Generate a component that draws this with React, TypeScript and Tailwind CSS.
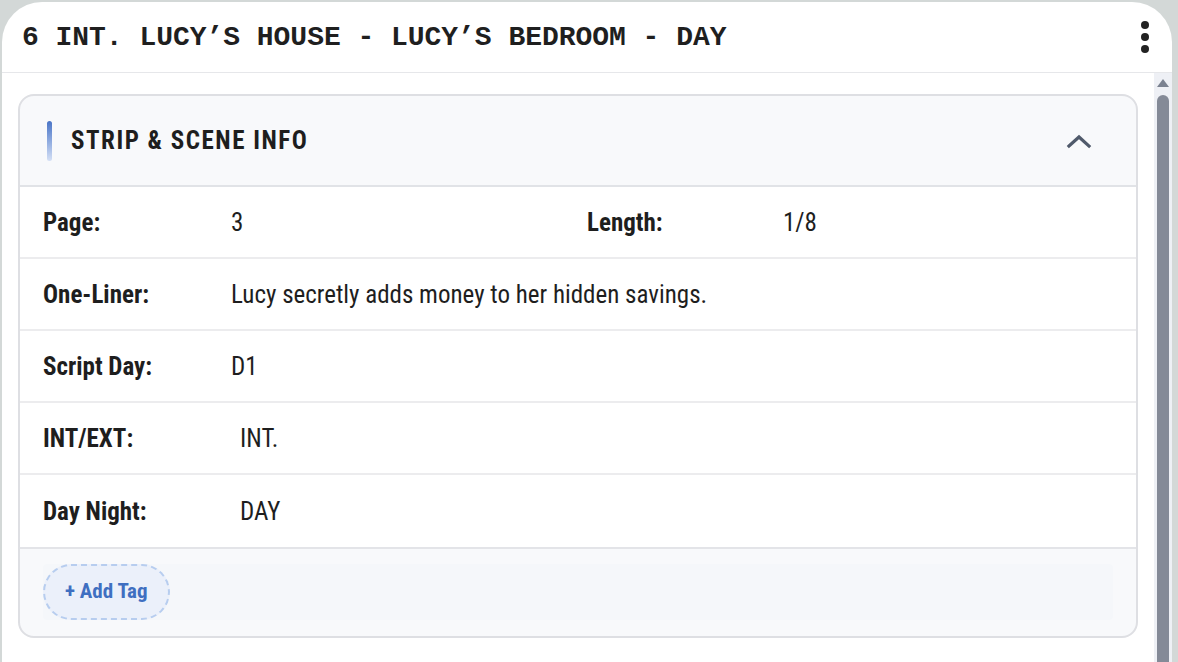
import React from 'react';

const rows: { label: string; value: string; indent?: boolean }[] = [
    { label: 'One-Liner:', value: 'Lucy secretly adds money to her hidden savings.' },
    { label: 'Script Day:', value: 'D1' },
    { label: 'INT/EXT:', value: 'INT.', indent: true },
    { label: 'Day Night:', value: 'DAY', indent: true },
];

export default function App() {
    return (
        <div className="w-[1178px] h-[662px] bg-[#d3d8d7] overflow-hidden pt-[2px] pl-[2px] pr-[6px]" style={{ fontFamily: 'Roboto, "Noto Sans", sans-serif' }}>
            <div className="h-[700px] bg-white rounded-t-[40px] flex flex-col overflow-hidden">
                {/* scene header */}
                <div className="h-[71px] shrink-0 flex items-center justify-between pl-[20px] pr-[22px] border-b border-[#e6e7ea]">
                    <h1 className="text-[28px] font-bold text-[#1f1f1f] tracking-[-0.03px] whitespace-pre pt-[1px]" style={{ fontFamily: '"Liberation Mono", "Courier New", monospace' }}>
                        6 INT. LUCY’S HOUSE - LUCY’S BEDROOM - DAY
                    </h1>
                    <svg width="10" height="34" viewBox="0 0 10 34" className="text-[#222]">
                        <circle cx="5" cy="5" r="4" fill="currentColor" />
                        <circle cx="5" cy="17" r="4" fill="currentColor" />
                        <circle cx="5" cy="29" r="4" fill="currentColor" />
                    </svg>
                </div>

                <div className="flex flex-1">
                    {/* content */}
                    <div className="flex-1 pl-[16px] pr-[16px] pt-[21px]">
                        <div className="rounded-[16px] border-2 border-[#dedfe3] bg-[#f8f9fb] overflow-hidden">
                            <div className="h-[91px] flex items-center justify-between pl-[27px] pr-[44px] border-b-2 border-[#e1e3e7]">
                                <div className="flex items-center gap-[19px]">
                                    <div className="w-[5px] h-[40px] rounded-full bg-gradient-to-b from-[#4a74c6] to-[#d5e0f5]" />
                                    <span className="text-[25px] font-bold tracking-[1.5px] text-[#1e1e1e] [font-stretch:87.5%]">STRIP &amp; SCENE INFO</span>
                                </div>
                                <svg width="26" height="16" viewBox="0 0 26 16" fill="none" stroke="#505a6b" strokeWidth="3.2" strokeLinecap="square">
                                    <path d="M3 13 L13 4 L23 13" />
                                </svg>
                            </div>

                            <div className="bg-white text-[25px] leading-[30px] text-[#1e1e1e] [font-stretch:87.5%]">
                                <div className="h-[72px] grid grid-cols-[188px_356px_196px_1fr] items-center px-[23px] pt-[2px] border-b-2 border-[#ececee]">
                                    <span className="font-bold">Page:</span>
                                    <span>3</span>
                                    <span className="font-bold">Length:</span>
                                    <span>1/8</span>
                                </div>
                                {rows.map((r, i) => (
                                    <div key={r.label} className={`h-[72px] flex items-center px-[23px] pt-[2px] ${i < rows.length - 1 ? 'border-b-2 border-[#ececee]' : ''}`}>
                                        <span className="w-[188px] font-bold shrink-0">{r.label}</span>
                                        <span className={r.indent ? 'ml-[9px]' : ''}>{r.value}</span>
                                    </div>
                                ))}
                            </div>

                            <div className="border-t-2 border-[#e3e4e8] px-[23px] pt-[15px] pb-[16px]">
                                <div className="bg-[#f5f7fa] rounded-[4px] pr-[24px]">
                                    <button className="h-[56px] px-[20px] rounded-full border-2 border-dashed border-[#b7cdef] bg-[#ebf0fa] text-[#3f6fc1] text-[21px] font-bold [font-stretch:87.5%]">
                                        + Add Tag
                                    </button>
                                </div>
                            </div>
                        </div>
                    </div>

                    {/* scrollbar */}
                    <div className="w-[18px] shrink-0 bg-[#eef0f5] flex flex-col items-center pt-[6px]">
                        <svg width="12" height="8" viewBox="0 0 12 8">
                            <path d="M6 0 L12 8 L0 8 Z" fill="#7b8290" />
                        </svg>
                        <div className="mt-[8px] w-[12px] flex-1 rounded-t-full bg-[#848a97]" />
                    </div>
                </div>
            </div>
        </div>
    );
}
